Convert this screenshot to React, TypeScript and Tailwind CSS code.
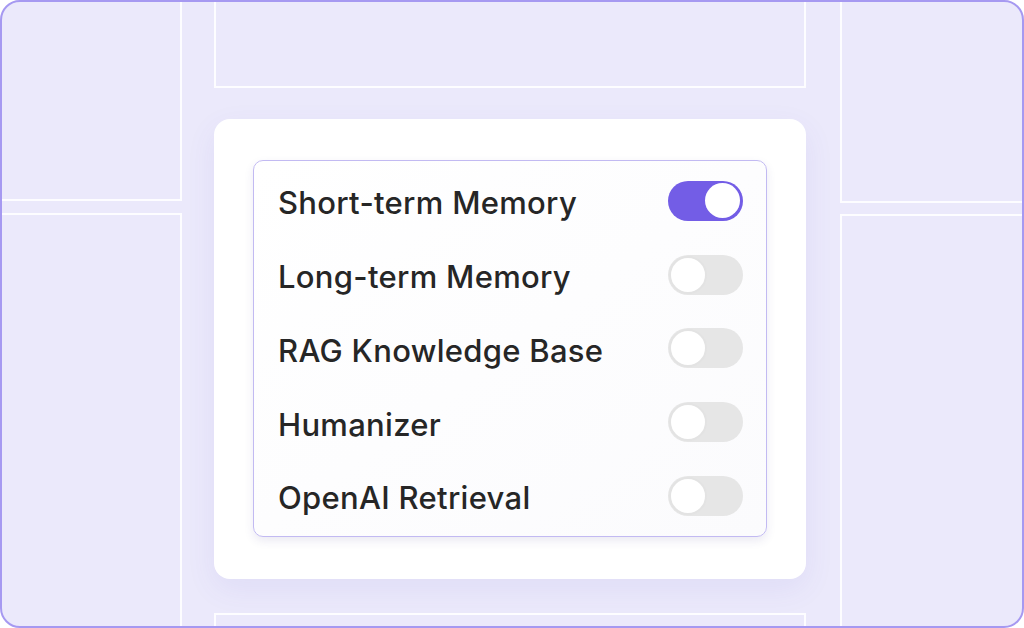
import React from "react";

const items: { label: string; on: boolean }[] = [
  { label: "Short-term Memory", on: true },
  { label: "Long-term Memory", on: false },
  { label: "RAG Knowledge Base", on: false },
  { label: "Humanizer", on: false },
  { label: "OpenAI Retrieval", on: false },
];

function Toggle({ on }: { on: boolean }) {
  return on ? (
    <div className="w-[75px] h-[40px] rounded-full bg-[#735de6] flex items-center justify-end pr-[3px]">
      <div className="w-[35px] h-[35px] rounded-full bg-white" />
    </div>
  ) : (
    <div className="w-[75px] h-[40px] rounded-full bg-[#e6e6e6] flex items-center justify-start pl-[1px]">
      <div className="w-[38px] h-[38px] rounded-full bg-white border-2 border-[#e3e3e3]" />
    </div>
  );
}

export default function App() {
  return (
    <div className="w-[1024px] h-[628px] rounded-[20px] border-2 border-[#a699f1] bg-[#ebe9fb] overflow-hidden flex">
      {/* left column */}
      <div className="flex flex-col w-[184px] -ml-[4px] shrink-0 gap-[12px]">
        <div className="h-[203px] -mt-[4px] border-2 border-white/90" />
        <div className="flex-1 border-2 border-white/90 -mb-[10px]" />
      </div>
      {/* middle column */}
      <div className="flex flex-col w-[592px] ml-[32px] shrink-0">
        <div className="h-[90px] -mt-[4px] border-2 border-white/90 shrink-0" />
        <div className="mt-[31px] h-[460px] shrink-0 rounded-[16px] bg-white shadow-[0_10px_30px_rgba(90,80,190,0.08)] px-[39px] pt-[41px] pb-[42px]">
          <div className="h-full rounded-[10px] border-[1.5px] border-[#c2baf2] bg-gradient-to-br from-white to-[#fbfbfd] shadow-[0_4px_10px_rgba(60,50,140,0.10)] pl-[24px] pr-[23px] py-[3px] flex flex-col">
            {items.map((it) => (
              <div key={it.label} className="h-[73.8px] flex items-center justify-between">
                <span
                  className="mt-[5px] text-[31px] font-medium text-[#262626] tracking-[0.3px]"
                  style={{ fontFamily: "Inter, 'Noto Sans', sans-serif" }}
                >
                  {it.label}
                </span>
                <Toggle on={it.on} />
              </div>
            ))}
          </div>
        </div>
        <div className="mt-[34px] h-[60px] shrink-0 border-2 border-white/90" />
      </div>
      {/* right column */}
      <div className="flex flex-col w-[200px] ml-[34px] shrink-0 gap-[11px]">
        <div className="h-[205px] -mt-[4px] border-2 border-white/90" />
        <div className="flex-1 border-2 border-white/90 -mb-[10px]" />
      </div>
    </div>
  );
}
